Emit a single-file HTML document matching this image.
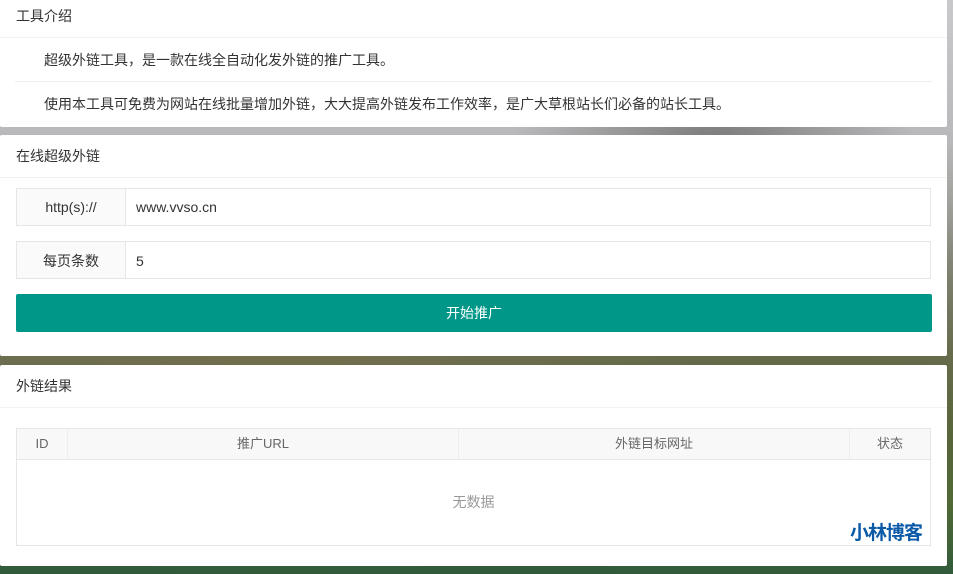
<!DOCTYPE html>
<html><head><meta charset="utf-8"><style>
*{margin:0;padding:0;box-sizing:border-box}
body{width:953px;height:574px;overflow:hidden;position:relative;font-family:"Liberation Sans","Noto Sans CJK SC",sans-serif;font-size:14px;color:#333;
background:linear-gradient(180deg,#c9c9cb 0%,#b8b8ba 25%,#8a8a80 45%,#6b6e52 62%,#58663a 75%,#4d6a34 88%,#2f5a3a 100%);}
.bg2{position:absolute;left:0;top:0;width:953px;height:574px;background:
radial-gradient(ellipse at 75% 25%,rgba(80,80,80,.6),transparent 20%),
radial-gradient(ellipse at 30% 65%,rgba(120,110,70,.5),transparent 40%),
radial-gradient(ellipse at 85% 70%,rgba(90,100,60,.5),transparent 35%);}
.p{position:absolute;left:0;width:947px;background:#fff;border-radius:2px}
.h{height:38px;line-height:34px;padding-left:16px;border-bottom:1px solid #f2f2f2;color:#333}
</style></head><body><div class="bg2"></div>
<div class="p" style="top:-4px;height:131px">
<div class="h" style="height:42px;line-height:40px">工具介绍</div>
<div style="margin:0 15px;padding-left:29px;height:44px;line-height:44px;border-bottom:1px solid #eee">超级外链工具，是一款在线全自动化发外链的推广工具。</div>
<div style="padding-left:44px;line-height:44px">使用本工具可免费为网站在线批量增加外链，大大提高外链发布工作效率，是广大草根站长们必备的站长工具。</div>
</div>
<div class="p" style="top:135px;height:221px">
<div class="h" style="height:43px;line-height:42px">在线超级外链</div>
<div style="position:absolute;left:16px;top:53px;width:915px;height:38px;border:1px solid #e6e6e6">
<div style="position:absolute;left:0;top:0;width:109px;height:36px;background:#fafafa;border-right:1px solid #e6e6e6;text-align:center;line-height:36px">http(s)://</div>
<div style="position:absolute;left:119px;line-height:36px">www.vvso.cn</div></div>
<div style="position:absolute;left:16px;top:106px;width:915px;height:38px;border:1px solid #e6e6e6">
<div style="position:absolute;left:0;top:0;width:109px;height:36px;background:#fafafa;border-right:1px solid #e6e6e6;text-align:center;line-height:38px">每页条数</div>
<div style="position:absolute;left:119px;line-height:38px">5</div></div>
<div style="position:absolute;left:16px;top:159px;width:916px;height:38px;background:#009688;border-radius:2px;color:#fff;text-align:center;line-height:38px">开始推广</div>
</div>
<div class="p" style="top:365px;height:201px">
<div class="h" style="height:43px;line-height:42px">外链结果</div>
<div style="position:absolute;left:16px;top:63px;width:915px;height:118px;border:1px solid #e6e6e6">
<div style="height:31px;background:#f8f8f8;border-bottom:1px solid #e6e6e6;display:flex;line-height:30px;color:#666;text-align:center;font-size:13px">
<div style="width:51px;border-right:1px solid #eee">ID</div>
<div style="width:391px;border-right:1px solid #eee">推广URL</div>
<div style="width:391px;border-right:1px solid #eee">外链目标网址</div>
<div style="flex:1">状态</div></div>
<div style="text-align:center;line-height:84px;color:#999">无数据</div>
<div style="position:absolute;right:8px;bottom:0px;color:#0b5aa8;font-weight:bold;font-size:19px;letter-spacing:-1px;font-family:'Noto Sans CJK SC',sans-serif">小林博客</div>
</div></div>
</body></html>
